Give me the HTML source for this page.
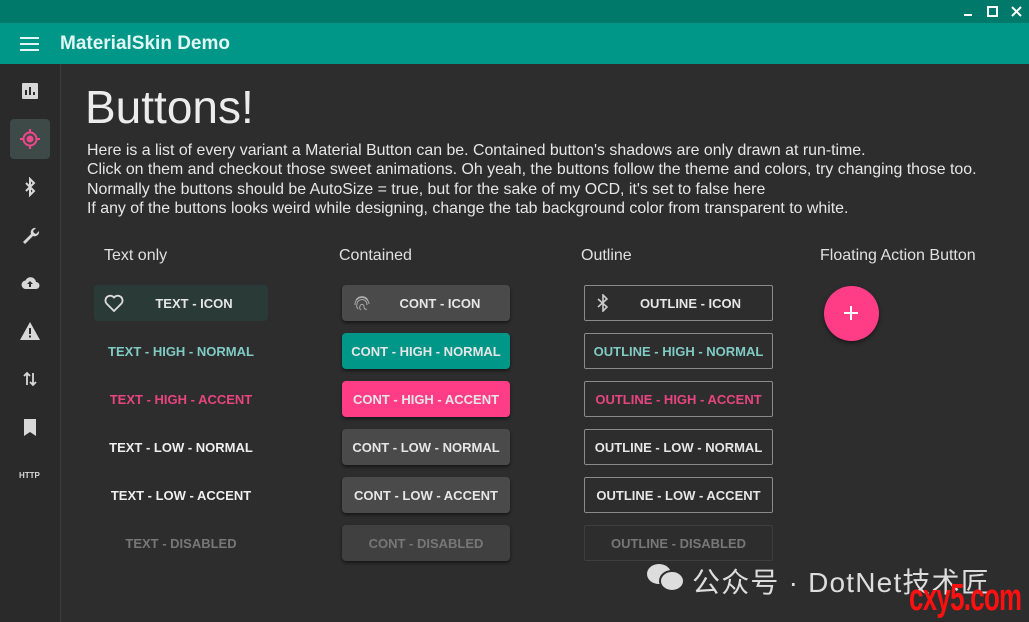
<!DOCTYPE html><html><head><meta charset="utf-8"><style>
*{margin:0;padding:0;box-sizing:border-box}
body{width:1029px;height:622px;background:#2d2d2d;font-family:"Liberation Sans","Noto Sans CJK SC",sans-serif;position:relative;overflow:hidden;color:#e8e8e8}
.a{position:absolute}
.tb{left:0;top:0;width:1029px;height:23px;background:#00796b}
.hd{left:0;top:23px;width:1029px;height:41px;background:#009688}
.sb{left:0;top:64px;width:61px;height:558px;background:#2a2a2a;border-right:1px solid #3c3c3c}
.ic{left:20px;width:20px;height:20px;fill:#d8d8d8}
.lbl{font-size:16px;color:#e0e0e0;top:247px}
.b{position:absolute;height:36px;display:flex;align-items:center;justify-content:center;font-size:13px;font-weight:bold;letter-spacing:0;border-radius:4px;white-space:nowrap}
.t{left:94px;width:174px}
.c{left:342px;width:168px;background:#4a4a4a;box-shadow:0 2px 3px rgba(0,0,0,.5);color:#e6e6e6}
.o{left:584px;width:189px;border:1px solid #8a8a8a;border-radius:2px;color:#e6e6e6}
</style></head><body>
<div class="a tb"></div>
<svg class="a" style="left:962px;top:6px" width="60" height="12"><rect x="2" y="8" width="8" height="2" fill="#fff"/><rect x="26" y="1" width="9" height="9" fill="none" stroke="#fff" stroke-width="2"/><path d="M50 1l9 9M59 1l-9 9" stroke="#fff" stroke-width="2"/></svg>
<div class="a hd"></div>
<svg class="a" style="left:20px;top:37px" width="20" height="14"><path d="M0 1h19M0 7h19M0 13h19" stroke="#e0f7f4" stroke-width="2"/></svg>
<div class="a" style="left:60px;top:33px;font-size:19px;font-weight:bold;color:#e0f7f4">MaterialSkin Demo</div>
<div class="a sb"></div>
<div class="a" style="left:10px;top:119px;width:40px;height:40px;background:#3e4a48;border-radius:4px"></div>
<svg class="a ic" style="top:81px" viewBox="0 0 20 20"><rect x="2" y="2" width="16" height="16" rx="1"/><path d="M6 14V9M10 14V6M14 14V11" stroke="#2a2a2a" stroke-width="2"/></svg>
<svg class="a ic" style="top:129px" viewBox="0 0 20 20"><circle cx="10" cy="10" r="6.5" fill="none" stroke="#f0478a" stroke-width="2"/><circle cx="10" cy="10" r="3.5" fill="#f0478a"/><path d="M10 0v4M10 16v4M0 10h4M16 10h4" stroke="#f0478a" stroke-width="2"/></svg>
<svg class="a ic" style="top:177px" viewBox="0 0 20 20"><path d="M6 6l8 8-4 4V2l4 4-8 8" fill="none" stroke="#d8d8d8" stroke-width="2"/></svg>
<svg class="a ic" style="top:225px" viewBox="0 0 20 20"><path d="M3 17L11 9a4.5 4.5 0 0 1 5-6l-3 3 1 2 2 1 3-3a4.5 4.5 0 0 1-6 5l-8 8z"/></svg>
<svg class="a ic" style="top:273px" viewBox="0 0 20 20"><path d="M5 16h11a3.5 3.5 0 0 0 0-7 5.5 5.5 0 0 0-10.5-1.5A4.3 4.3 0 0 0 5 16z"/><path d="M10 8l-3 3h2v3h2v-3h2z" fill="#2a2a2a"/></svg>
<svg class="a ic" style="top:321px" viewBox="0 0 20 20"><path d="M10 1L0 19h20z"/><path d="M9 7h2v6H9zM9 14.5h2v2H9z" fill="#2a2a2a"/></svg>
<svg class="a ic" style="top:369px" viewBox="0 0 20 20"><path d="M7 16V4M4 7l3-3 3 3M13 4v12M10 13l3 3 3-3" fill="none" stroke="#d8d8d8" stroke-width="1.8"/></svg>
<svg class="a ic" style="top:417px" viewBox="0 0 20 20"><path d="M4 2h12v17l-6-4-6 4z"/></svg>
<div class="a" style="left:19px;top:471px;font-size:8px;font-weight:bold;color:#d8d8d8">HTTP</div>
<div class="a" style="left:85px;top:80px;font-size:46px;color:#ececec">Buttons!</div>
<div class="a" style="left:87px;top:141px;font-size:15.9px;line-height:19.3px;color:#e6e6e6;white-space:nowrap">Here is a list of every variant a Material Button can be. Contained button's shadows are only drawn at run-time.<br>Click on them and checkout those sweet animations. Oh yeah, the buttons follow the theme and colors, try changing those too.<br>Normally the buttons should be AutoSize = true, but for the sake of my OCD, it's set to false here<br>If any of the buttons looks weird while designing, change the tab background color from transparent to white.</div>
<div class="a lbl" style="left:104px">Text only</div>
<div class="a lbl" style="left:339px">Contained</div>
<div class="a lbl" style="left:581px">Outline</div>
<div class="a lbl" style="left:820px">Floating Action Button</div>

<div class="b t" style="top:285px;background:#293a37;color:#e6e6e6;padding-left:26px">TEXT - ICON</div>
<svg class="a" style="left:104px;top:294px" width="20" height="18" viewBox="0 0 20 18"><path d="M10 17L2.5 9.5A4.5 4.5 0 0 1 10 3.5a4.5 4.5 0 0 1 7.5 6z" fill="none" stroke="#ddd" stroke-width="1.8"/></svg>
<div class="b t" style="top:333px;color:#80cbc4">TEXT - HIGH - NORMAL</div>
<div class="b t" style="top:381px;color:#e8457f">TEXT - HIGH - ACCENT</div>
<div class="b t" style="top:429px;color:#eee">TEXT - LOW - NORMAL</div>
<div class="b t" style="top:477px;color:#eee">TEXT - LOW - ACCENT</div>
<div class="b t" style="top:525px;color:#777">TEXT - DISABLED</div>

<div class="b c" style="top:285px;padding-left:28px">CONT - ICON</div>
<svg class="a" style="left:353px;top:294px" width="18" height="18" viewBox="0 0 18 18" fill="none" stroke="#aaa" stroke-width="1"><path d="M3 6a7 7 0 0 1 12 0M2 11a7 7 0 0 1 14-1M5 15a5 5 0 0 1-1-5 5 5 0 0 1 10 1M8 16a3 3 0 0 1-1-4 2 2 0 0 1 4 1 2 2 0 0 0 3 2"/></svg>
<div class="b c" style="top:333px;background:#009688">CONT - HIGH - NORMAL</div>
<div class="b c" style="top:381px;background:#ff3d86">CONT - HIGH - ACCENT</div>
<div class="b c" style="top:429px">CONT - LOW - NORMAL</div>
<div class="b c" style="top:477px">CONT - LOW - ACCENT</div>
<div class="b c" style="top:525px;background:#404040;color:#777">CONT - DISABLED</div>

<div class="b o" style="top:285px;padding-left:24px">OUTLINE - ICON</div>
<svg class="a" style="left:596px;top:294px" width="14" height="18" viewBox="0 0 14 18"><path d="M2 5l9 8-4 4V1l4 4-9 8" fill="none" stroke="#ccc" stroke-width="1.6"/></svg>
<div class="b o" style="top:333px;color:#80cbc4">OUTLINE - HIGH - NORMAL</div>
<div class="b o" style="top:381px;color:#e8457f">OUTLINE - HIGH - ACCENT</div>
<div class="b o" style="top:429px">OUTLINE - LOW - NORMAL</div>
<div class="b o" style="top:477px">OUTLINE - LOW - ACCENT</div>
<div class="b o" style="top:525px;border-color:#3e3e3e;color:#777">OUTLINE - DISABLED</div>

<div class="a" style="left:824px;top:286px;width:55px;height:55px;border-radius:50%;background:#ff3d86;box-shadow:0 2px 4px rgba(0,0,0,.5)"></div>
<svg class="a" style="left:844px;top:306px" width="14" height="14"><path d="M7 0v14M0 7h14" stroke="#fff" stroke-width="2"/></svg>

<svg class="a" style="left:645px;top:563px" width="42" height="30" viewBox="0 0 42 30"><ellipse cx="14" cy="11" rx="12" ry="10" fill="#ddd"/><ellipse cx="27" cy="18" rx="12" ry="10" fill="#ddd" stroke="#2d2d2d" stroke-width="2"/></svg>
<div class="a" style="left:692px;top:561px;font-size:28px;color:#ddd;white-space:nowrap;letter-spacing:1.2px">公众号 · DotNet技术匠</div>
<div class="a" style="left:909px;top:578px;font-size:38px;line-height:40px;font-weight:bold;color:#ff1010;transform:scaleX(.68);transform-origin:left;letter-spacing:-1px">cxy5.com</div>
</body></html>
